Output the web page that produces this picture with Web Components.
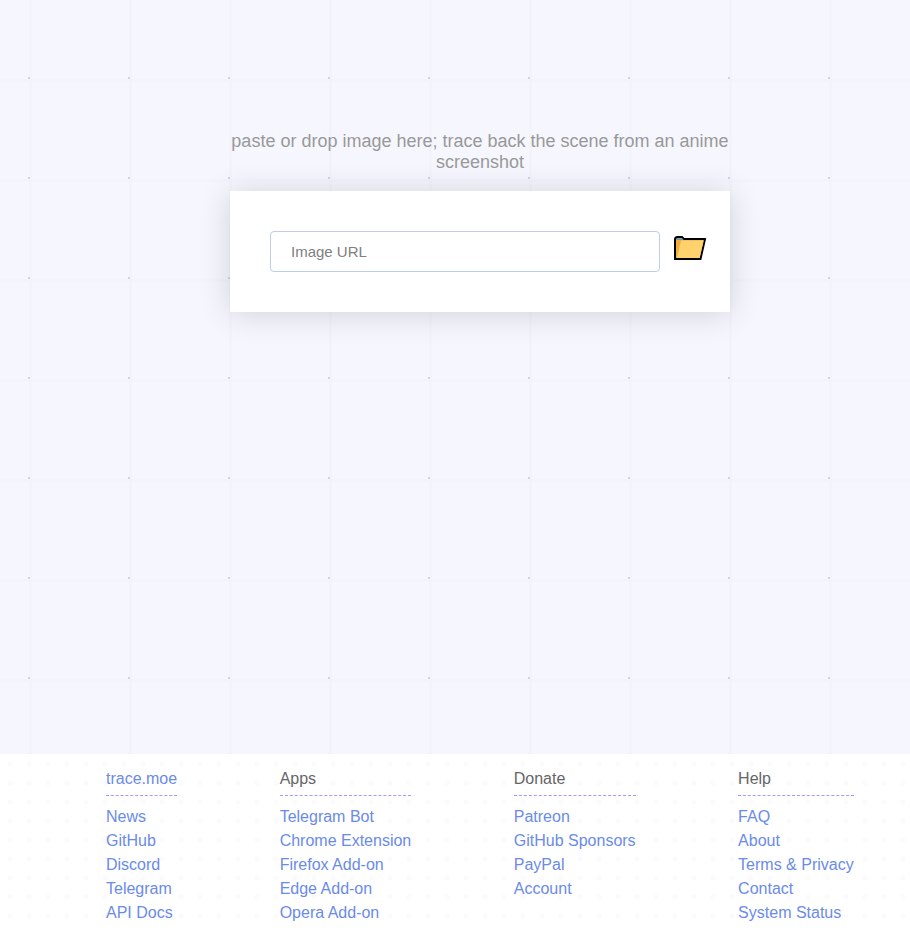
<!DOCTYPE html>
<html>
<head>
<meta charset="utf-8">
<title>trace.moe</title>
<style>
    html, body { margin: 0; height: 100%; overflow: hidden; }
    body { font-family: "Liberation Sans", Arial, sans-serif; }
</style>
</head>
<body>
<trace-app>
    <search-box slot="main" hint="paste or drop image here; trace back the scene from an anime screenshot"></search-box>
    <site-footer slot="footer">
        <footer-column title="trace.moe" links="News|GitHub|Discord|Telegram|API Docs" accent></footer-column>
        <footer-column title="Apps" links="Telegram Bot|Chrome Extension|Firefox Add-on|Edge Add-on|Opera Add-on"></footer-column>
        <footer-column title="Donate" links="Patreon|GitHub Sponsors|PayPal|Account"></footer-column>
        <footer-column title="Help" links="FAQ|About|Terms &amp; Privacy|Contact|System Status"></footer-column>
    </site-footer>
</trace-app>
<script>
class TraceApp extends HTMLElement {
    constructor() {
        super();
        this.attachShadow({ mode: 'open' });
        this.shadowRoot.innerHTML = `
            <style>
                :host {
                    display: flex;
                    flex-direction: column;
                    height: 931px;
                    background-color: #f6f6fe;
                }
                main {
                    flex: 1;
                    display: flex;
                    padding: 131px 0 0 230px;
                    background-color: #f6f6fe;
                    background-image:
                        radial-gradient(circle at 29px 78px, #d2d2f0 0, #d2d2f0 1.1px, transparent 1.5px),
                        linear-gradient(90deg, transparent 29px, #f3f3fb 29px, #f3f3fb 32px, transparent 32px),
                        linear-gradient(180deg, transparent 79px, #f4f4fc 79px, #f4f4fc 82px, transparent 82px);
                    background-size: 100px 100px;
                }
            </style>
            <main><slot name="main"></slot></main>
            <slot name="footer"></slot>
        `;
    }
}

class SearchBox extends HTMLElement {
    constructor() {
        super();
        this.attachShadow({ mode: 'open' });
        this.shadowRoot.innerHTML = `
            <style>
                :host { display: block; width: 500px; }
                .hint {
                    color: #999;
                    font-size: 18px;
                    line-height: 21px;
                    text-align: center;
                    margin-bottom: 18px;
                }
                .card {
                    display: flex;
                    align-items: flex-start;
                    gap: 14px;
                    background: #fff;
                    padding: 40px;
                    box-shadow: 0 2px 30px rgba(0, 0, 0, 0.15);
                }
                input {
                    box-sizing: border-box;
                    width: 390px;
                    height: 41px;
                    flex: none;
                    padding: 0 20px;
                    border: 1px solid #bccdee;
                    border-radius: 4px;
                    font: 15px "Liberation Sans", Arial, sans-serif;
                    outline: none;
                }
                input::placeholder { color: #808080; opacity: 1; }
                svg { flex: none; margin-top: 5px; }
            </style>
            <div class="hint">${this.getAttribute('hint')}</div>
            <div class="card">
                <input type="text" placeholder="Image URL">
                <svg width="33" height="25" viewBox="0 0 33 25">
                    <path d="M1 23V3.5Q1 1 3.5 1H8L10 3H31L26.5 23Z" fill="#f0ac3f" stroke="#000" stroke-width="2"/>
                    <path d="M2.5 4V3.5Q2.5 2.2 4 2.2H8L9.5 4Z" fill="#5b9bc7"/>
                    <path d="M7 4.5H29.7L25.6 22H3Z" fill="#ffd26e"/>
                </svg>
            </div>
        `;
    }
}

class SiteFooter extends HTMLElement {
    constructor() {
        super();
        this.attachShadow({ mode: 'open' });
        this.shadowRoot.innerHTML = `
            <style>
                :host {
                    display: flex;
                    gap: 102.5px;
                    height: 177px;
                    box-sizing: border-box;
                    padding: 13px 0 0 106px;
                    background-color: #fff;
                    background-image: radial-gradient(circle at 10px 10px, #fbfbfe 0, #fbfbfe 2px, transparent 3px);
                    background-size: 19px 19px;
                }
            </style>
            <slot></slot>
        `;
    }
}

class FooterColumn extends HTMLElement {
    constructor() {
        super();
        this.attachShadow({ mode: 'open' });
        const links = this.getAttribute('links').split('|');
        this.shadowRoot.innerHTML = `
            <style>
                :host { display: block; font-size: 16px; line-height: 24px; }
                .title {
                    color: #666;
                    padding-bottom: 4px;
                    margin-bottom: 9px;
                    border-bottom: 1px dashed #9c9cff;
                }
                :host([accent]) .title { color: #6b8be8; }
                a { display: block; color: #6b8be8; text-decoration: none; white-space: nowrap; }
            </style>
            <div class="title">${this.getAttribute('title')}</div>
            ${links.map(link => `<a href="#">${link.replace('&', '&amp;')}</a>`).join('')}
        `;
    }
}

customElements.define('trace-app', TraceApp);
customElements.define('search-box', SearchBox);
customElements.define('site-footer', SiteFooter);
customElements.define('footer-column', FooterColumn);
</script>
</body>
</html>
